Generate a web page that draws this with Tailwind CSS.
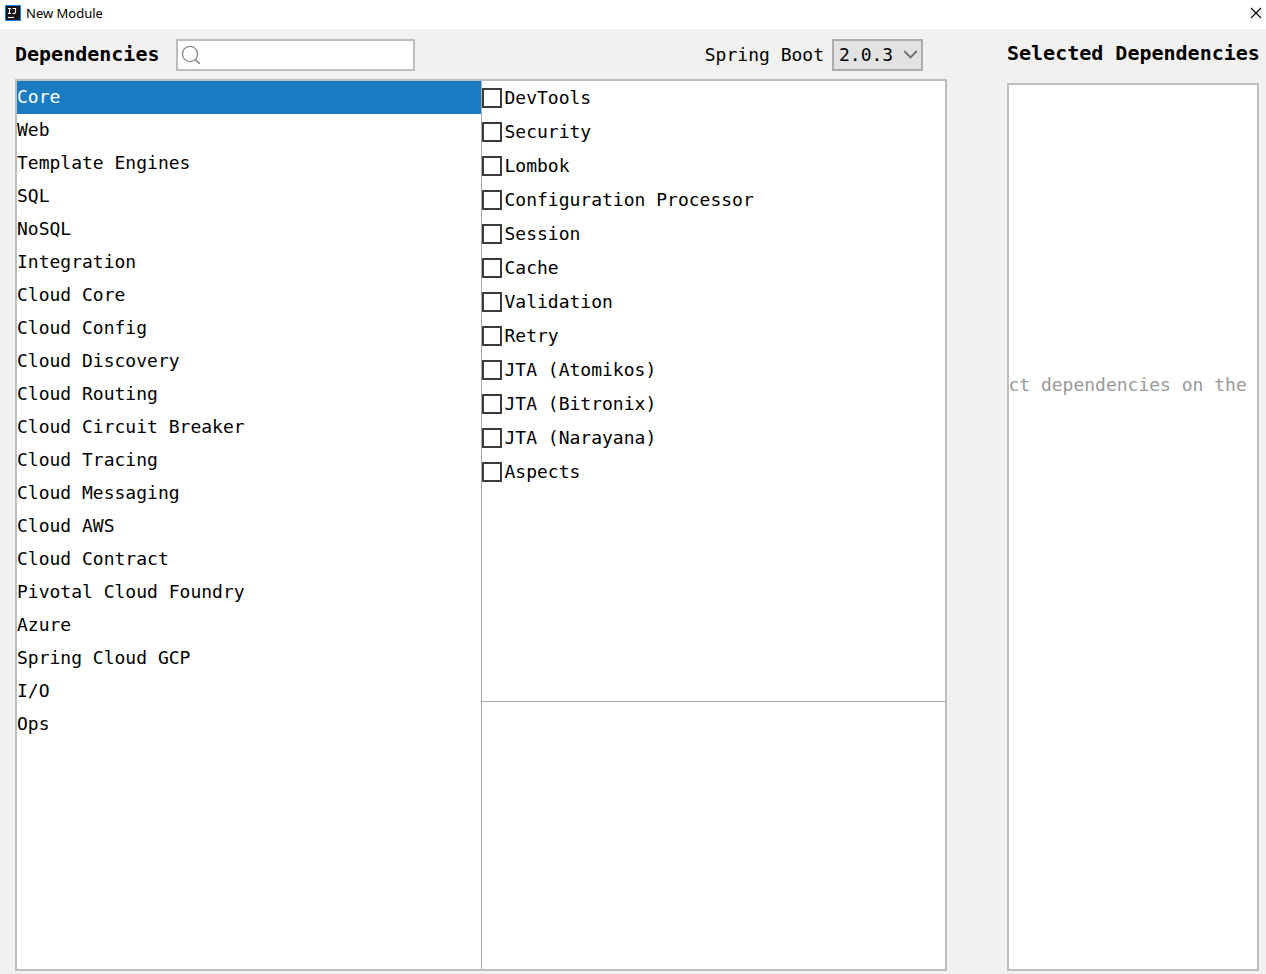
<!DOCTYPE html>
<html lang="en">
<head>
<meta charset="utf-8">
<title>New Module</title>
<script src="https://cdn.jsdelivr.net/npm/@tailwindcss/browser@4"></script>
</head>
<body class="flex h-screen flex-col overflow-hidden bg-[#f1f1f1] font-['DejaVu_Sans_Mono',monospace] text-[18px] text-black">
<header class="flex h-[29px] shrink-0 items-center bg-white pr-[3px] pb-[3px] pl-[5px]">
  <svg class="size-4" viewBox="0 0 16 16" aria-hidden="true">
    <rect width="16" height="16" fill="#087cfa"/>
    <rect x="1" y="1" width="14" height="14" fill="#151515"/>
    <path d="M3 3.5h3M4.5 3.5v5M3 8.5h3M7.5 3.5h3v4l-1 1h-2" fill="none" stroke="#fff" stroke-width="1.2"/>
    <path d="M3 12.5h6" stroke="#fff" stroke-width="1.2"/>
  </svg>
  <h1 class="ml-[5px] pt-px font-['Noto_Sans',sans-serif] text-[13px]">New Module</h1>
  <button type="button" aria-label="Close" class="ml-auto p-px">
    <svg class="size-3" viewBox="0 0 12 12" fill="none" stroke="#000" stroke-width="1.1"><path d="M1 1l10 10M11 1L1 11"/></svg>
  </button>
</header>
<main class="flex min-h-0 flex-1 gap-[60px] pr-[7px] pb-[3px] pl-[15px]">
  <section class="flex min-w-0 flex-1 flex-col">
    <div class="flex h-[50px] shrink-0 items-center pt-px pr-6">
      <label for="search" class="pb-0.5 text-[20px] font-bold">Dependencies</label>
      <div class="relative ml-4">
        <input id="search" type="text" class="block h-8 w-[239px] border-2 border-[#bdbdbd] bg-white pl-7 outline-none">
        <svg class="pointer-events-none absolute top-[6px] left-[5px] size-5" viewBox="0 0 20 20" fill="none" stroke="#8c8c8c" stroke-width="1.4" aria-hidden="true"><circle cx="9" cy="9" r="7.6"/><path d="M14.3 14.3l4.5 4.5" stroke-width="1.8"/></svg>
      </div>
      <label for="version" class="ml-auto">Spring Boot</label>
      <div class="relative ml-2">
        <select id="version" class="block h-8 w-[91px] appearance-none border-2 border-[#adadad] bg-[#e2e2e2] pb-[6px] pl-[5px] outline-none">
          <option>2.0.3</option>
        </select>
        <svg class="pointer-events-none absolute top-[11px] right-[5px] h-[9px] w-[15px]" viewBox="0 0 15 9" fill="none" stroke="#6e6e6e" stroke-width="1.8" aria-hidden="true"><path d="M1.2 1l6.3 6.4L13.8 1"/></svg>
      </div>
    </div>
    <div class="flex min-h-0 flex-1 border-2 border-[#bebebe] bg-white">
      <ul class="min-w-0 flex-1 leading-[31px] *:pb-0.5">
        <li class="bg-[#1a7dc4] text-white">Core</li>
        <li>Web</li>
        <li>Template Engines</li>
        <li>SQL</li>
        <li>NoSQL</li>
        <li>Integration</li>
        <li>Cloud Core</li>
        <li>Cloud Config</li>
        <li>Cloud Discovery</li>
        <li>Cloud Routing</li>
        <li>Cloud Circuit Breaker</li>
        <li>Cloud Tracing</li>
        <li>Cloud Messaging</li>
        <li>Cloud AWS</li>
        <li>Cloud Contract</li>
        <li>Pivotal Cloud Foundry</li>
        <li>Azure</li>
        <li>Spring Cloud GCP</li>
        <li>I/O</li>
        <li>Ops</li>
      </ul>
      <div class="w-px bg-[#aaaaaa]"></div>
      <div class="flex min-h-0 min-w-0 flex-1 flex-col">
        <div class="flex-1 leading-[34px]">
          <label class="flex items-center gap-[3px]"><input type="checkbox" class="size-5 appearance-none border-2 border-[#3c3c3c] bg-white checked:bg-[#3c3c3c]">DevTools</label>
          <label class="flex items-center gap-[3px]"><input type="checkbox" class="size-5 appearance-none border-2 border-[#3c3c3c] bg-white checked:bg-[#3c3c3c]">Security</label>
          <label class="flex items-center gap-[3px]"><input type="checkbox" class="size-5 appearance-none border-2 border-[#3c3c3c] bg-white checked:bg-[#3c3c3c]">Lombok</label>
          <label class="flex items-center gap-[3px]"><input type="checkbox" class="size-5 appearance-none border-2 border-[#3c3c3c] bg-white checked:bg-[#3c3c3c]">Configuration Processor</label>
          <label class="flex items-center gap-[3px]"><input type="checkbox" class="size-5 appearance-none border-2 border-[#3c3c3c] bg-white checked:bg-[#3c3c3c]">Session</label>
          <label class="flex items-center gap-[3px]"><input type="checkbox" class="size-5 appearance-none border-2 border-[#3c3c3c] bg-white checked:bg-[#3c3c3c]">Cache</label>
          <label class="flex items-center gap-[3px]"><input type="checkbox" class="size-5 appearance-none border-2 border-[#3c3c3c] bg-white checked:bg-[#3c3c3c]">Validation</label>
          <label class="flex items-center gap-[3px]"><input type="checkbox" class="size-5 appearance-none border-2 border-[#3c3c3c] bg-white checked:bg-[#3c3c3c]">Retry</label>
          <label class="flex items-center gap-[3px]"><input type="checkbox" class="size-5 appearance-none border-2 border-[#3c3c3c] bg-white checked:bg-[#3c3c3c]">JTA (Atomikos)</label>
          <label class="flex items-center gap-[3px]"><input type="checkbox" class="size-5 appearance-none border-2 border-[#3c3c3c] bg-white checked:bg-[#3c3c3c]">JTA (Bitronix)</label>
          <label class="flex items-center gap-[3px]"><input type="checkbox" class="size-5 appearance-none border-2 border-[#3c3c3c] bg-white checked:bg-[#3c3c3c]">JTA (Narayana)</label>
          <label class="flex items-center gap-[3px]"><input type="checkbox" class="size-5 appearance-none border-2 border-[#3c3c3c] bg-white checked:bg-[#3c3c3c]">Aspects</label>
        </div>
        <div class="h-[268px] shrink-0 border-t border-[#aaaaaa]"></div>
      </div>
    </div>
  </section>
  <section class="flex w-[252px] shrink-0 flex-col">
    <h2 class="flex h-[54px] shrink-0 items-center pb-[6px] text-[20px] font-bold whitespace-nowrap">Selected Dependencies</h2>
    <div class="flex min-h-0 flex-1 justify-center overflow-hidden border-2 border-[#bebebe] bg-white pt-[286px]">
      <p class="shrink-0 whitespace-nowrap text-[#999999]">Select dependencies on the left</p>
    </div>
  </section>
</main>
</body>
</html>
